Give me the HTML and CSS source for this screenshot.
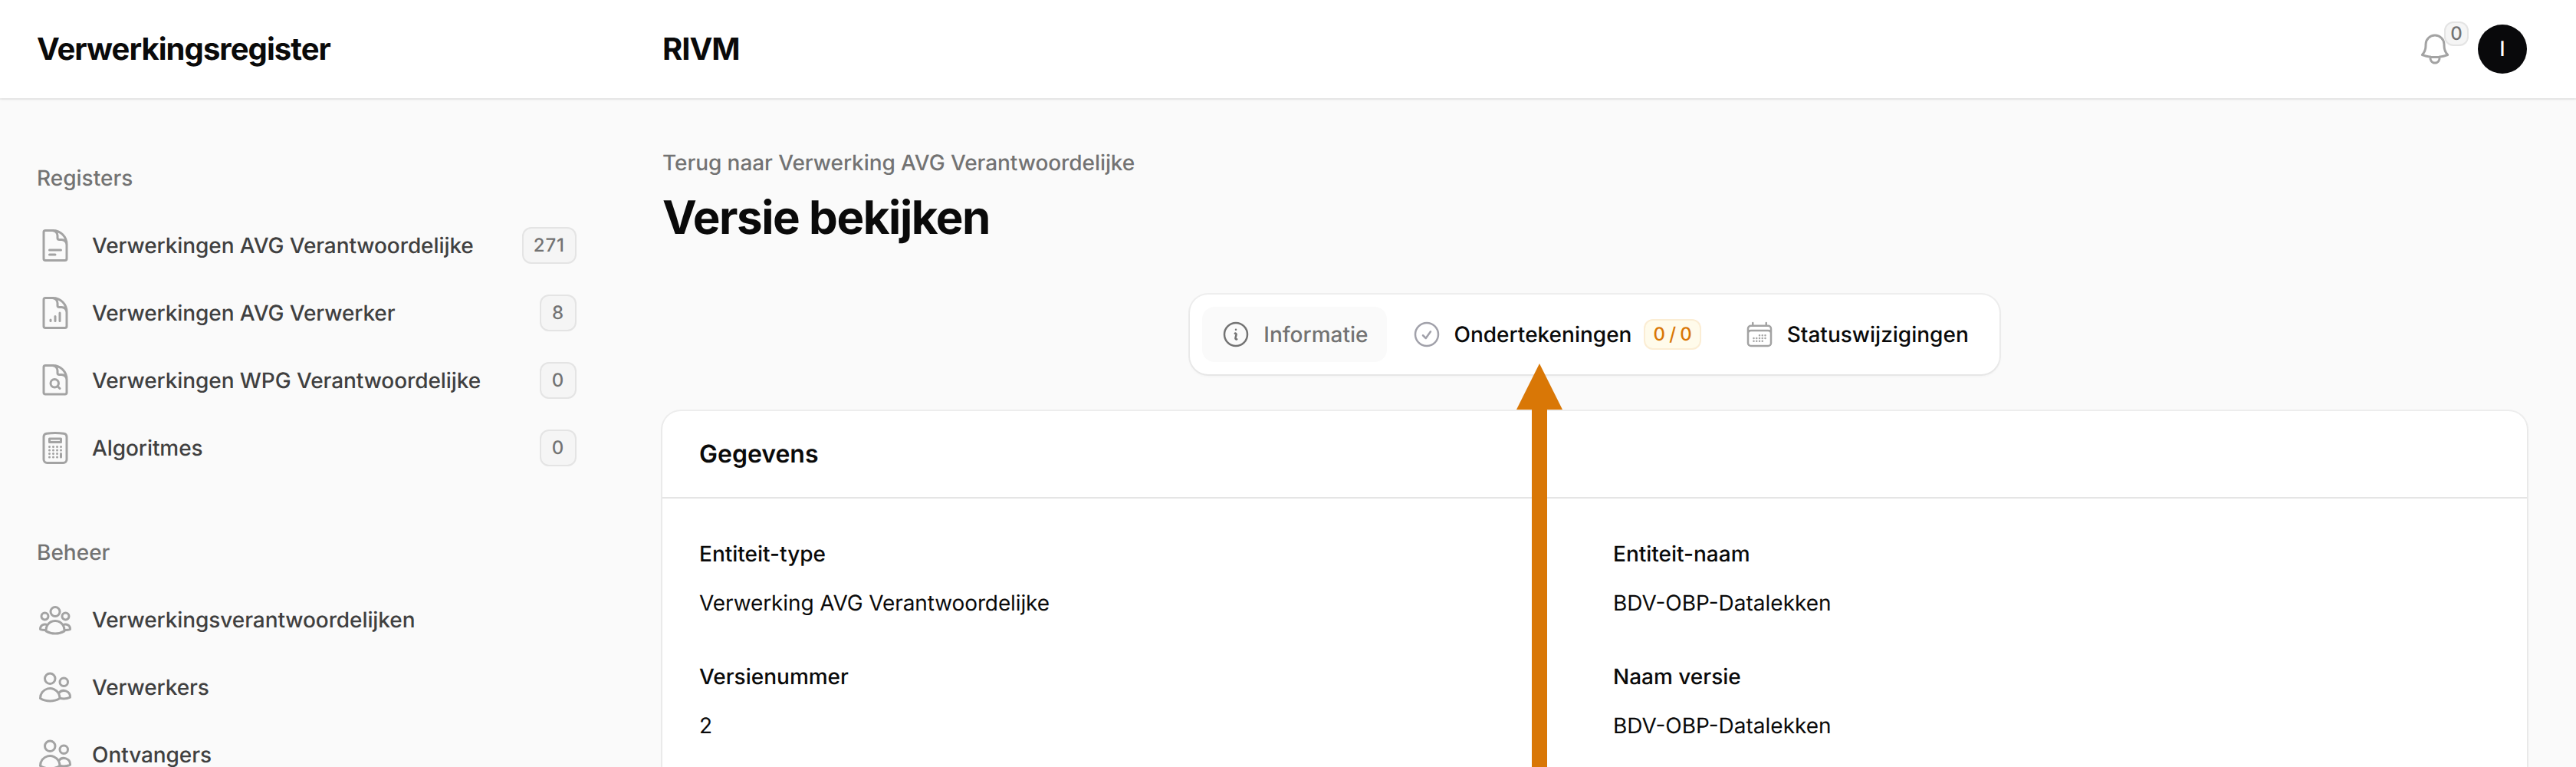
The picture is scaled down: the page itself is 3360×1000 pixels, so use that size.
FILE: index.html
```
<!DOCTYPE html>
<html lang="nl">
<head>
<meta charset="utf-8">
<title>Versie bekijken - Verwerkingsregister</title>
<link rel="stylesheet" href="styles.css">
</head>
<body>
<header class="topbar">
  <div class="brand">Verwerkingsregister</div>
  <div class="tenant">RIVM</div>
  <div class="topbar-actions">
    <div class="notifications">
      <svg class="icon" viewBox="0 0 24 24"><path d="M14.857 17.082a23.848 23.848 0 0 0 5.454-1.31A8.967 8.967 0 0 1 18 9.75V9A6 6 0 0 0 6 9v.75a8.967 8.967 0 0 1-2.312 6.022c1.733.64 3.56 1.085 5.455 1.31m5.714 0a24.255 24.255 0 0 1-5.714 0m5.714 0a3 3 0 1 1-5.714 0"/></svg>
      <span class="badge badge-count">0</span>
    </div>
    <div class="avatar">I</div>
  </div>
</header>
<div class="layout">
  <nav class="sidebar">
    <section class="nav-group">
      <h2 class="nav-label">Registers</h2>
      <a class="nav-item">
        <svg class="icon" viewBox="0 0 24 24"><path d="M19.5 14.25v-2.625a3.375 3.375 0 0 0-3.375-3.375h-1.5A1.125 1.125 0 0 1 13.5 7.125v-1.5a3.375 3.375 0 0 0-3.375-3.375H8.25m0 12.75h7.5m-7.5 3H12M10.5 2.25H5.625c-.621 0-1.125.504-1.125 1.125v17.25c0 .621.504 1.125 1.125 1.125h12.75c.621 0 1.125-.504 1.125-1.125V11.25a9 9 0 0 0-9-9Z"/></svg>
        <span class="nav-text">Verwerkingen AVG Verantwoordelijke</span>
        <span class="badge">271</span>
      </a>
      <a class="nav-item">
        <svg class="icon" viewBox="0 0 24 24"><path d="M19.5 14.25v-2.625a3.375 3.375 0 0 0-3.375-3.375h-1.5A1.125 1.125 0 0 1 13.5 7.125v-1.5a3.375 3.375 0 0 0-3.375-3.375H8.25M9 16.5v.75m3-3v3M15 12v5.25m-4.5-15H5.625c-.621 0-1.125.504-1.125 1.125v17.25c0 .621.504 1.125 1.125 1.125h12.75c.621 0 1.125-.504 1.125-1.125V11.25a9 9 0 0 0-9-9Z"/></svg>
        <span class="nav-text">Verwerkingen AVG Verwerker</span>
        <span class="badge">8</span>
      </a>
      <a class="nav-item">
        <svg class="icon" viewBox="0 0 24 24"><path d="M19.5 14.25v-2.625a3.375 3.375 0 0 0-3.375-3.375h-1.5A1.125 1.125 0 0 1 13.5 7.125v-1.5a3.375 3.375 0 0 0-3.375-3.375H8.25m5.231 13.481L15 17.25m-4.5-15H5.625c-.621 0-1.125.504-1.125 1.125v16.5c0 .621.504 1.125 1.125 1.125h12.75c.621 0 1.125-.504 1.125-1.125V11.25a9 9 0 0 0-9-9Zm3.75 11.625a2.625 2.625 0 1 1-5.25 0 2.625 2.625 0 0 1 5.25 0Z"/></svg>
        <span class="nav-text">Verwerkingen WPG Verantwoordelijke</span>
        <span class="badge">0</span>
      </a>
      <a class="nav-item">
        <svg class="icon" viewBox="0 0 24 24"><path d="M15.75 15.75V18m-7.5-6.75h.008v.008H8.25v-.008Zm0 2.25h.008v.008H8.25V13.5Zm0 2.25h.008v.008H8.25v-.008Zm0 2.25h.008v.008H8.25V18Zm2.498-6.75h.007v.008h-.007v-.008Zm0 2.25h.007v.008h-.007V13.5Zm0 2.25h.007v.008h-.007v-.008Zm0 2.25h.007v.008h-.007V18Zm2.504-6.75h.008v.008h-.008v-.008Zm0 2.25h.008v.008h-.008V13.5Zm0 2.25h.008v.008h-.008v-.008Zm0 2.25h.008v.008h-.008V18Zm2.498-6.75h.008v.008h-.008v-.008Zm0 2.25h.008v.008h-.008V13.5ZM8.25 6h7.5v2.25h-7.5V6ZM12 2.25c-1.892 0-3.758.11-5.593.322C5.307 2.7 4.5 3.65 4.5 4.757V19.5a2.25 2.25 0 0 0 2.25 2.25h10.5a2.25 2.25 0 0 0 2.25-2.25V4.757c0-1.108-.806-2.057-1.907-2.185A48.507 48.507 0 0 0 12 2.25Z"/></svg>
        <span class="nav-text">Algoritmes</span>
        <span class="badge">0</span>
      </a>
    </section>
    <section class="nav-group">
      <h2 class="nav-label">Beheer</h2>
      <a class="nav-item">
        <svg class="icon" viewBox="0 0 24 24"><path d="M18 18.72a9.094 9.094 0 0 0 3.741-.479 3 3 0 0 0-4.682-2.72m.94 3.198.001.031c0 .225-.012.447-.037.666A11.944 11.944 0 0 1 12 21c-2.17 0-4.207-.576-5.963-1.584A6.062 6.062 0 0 1 6 18.719m12 0a5.971 5.971 0 0 0-.941-3.197m0 0A5.995 5.995 0 0 0 12 12.75a5.995 5.995 0 0 0-5.058 2.772m0 0a3 3 0 0 0-4.681 2.72 8.986 8.986 0 0 0 3.74.477m.94-3.197a5.971 5.971 0 0 0-.94 3.197M15 6.75a3 3 0 1 1-6 0 3 3 0 0 1 6 0Zm6 3a2.25 2.25 0 1 1-4.5 0 2.25 2.25 0 0 1 4.5 0Zm-13.5 0a2.25 2.25 0 1 1-4.5 0 2.25 2.25 0 0 1 4.5 0Z"/></svg>
        <span class="nav-text">Verwerkingsverantwoordelijken</span>
      </a>
      <a class="nav-item">
        <svg class="icon" viewBox="0 0 24 24"><path d="M15 19.128a9.38 9.38 0 0 0 2.625.372 9.337 9.337 0 0 0 4.121-.952 4.125 4.125 0 0 0-7.533-2.493M15 19.128v-.003c0-1.113-.285-2.16-.786-3.07M15 19.128v.106A12.318 12.318 0 0 1 8.624 21c-2.331 0-4.512-.645-6.374-1.766l-.001-.109a6.375 6.375 0 0 1 11.964-3.07M12 6.375a3.375 3.375 0 1 1-6.75 0 3.375 3.375 0 0 1 6.75 0Zm8.25 2.25a2.625 2.625 0 1 1-5.25 0 2.625 2.625 0 0 1 5.25 0Z"/></svg>
        <span class="nav-text">Verwerkers</span>
      </a>
      <a class="nav-item">
        <svg class="icon" viewBox="0 0 24 24"><path d="M15 19.128a9.38 9.38 0 0 0 2.625.372 9.337 9.337 0 0 0 4.121-.952 4.125 4.125 0 0 0-7.533-2.493M15 19.128v-.003c0-1.113-.285-2.16-.786-3.07M15 19.128v.106A12.318 12.318 0 0 1 8.624 21c-2.331 0-4.512-.645-6.374-1.766l-.001-.109a6.375 6.375 0 0 1 11.964-3.07M12 6.375a3.375 3.375 0 1 1-6.75 0 3.375 3.375 0 0 1 6.75 0Zm8.25 2.25a2.625 2.625 0 1 1-5.25 0 2.625 2.625 0 0 1 5.25 0Z"/></svg>
        <span class="nav-text">Ontvangers</span>
      </a>
    </section>
  </nav>
  <main class="main">
    <div class="page-header">
      <a class="back-link">Terug naar Verwerking AVG Verantwoordelijke</a>
      <h1 class="page-title">Versie bekijken</h1>
    </div>
    <div class="tabs">
      <a class="tab tab-active">
        <svg class="tab-icon" viewBox="0 0 24 24"><path d="m11.25 11.25.041-.02a.75.75 0 0 1 1.063.852l-.708 2.836a.75.75 0 0 0 1.063.853l.041-.021M21 12a9 9 0 1 1-18 0 9 9 0 0 1 18 0Zm-9-3.75h.008v.008H12V8.25Z"/></svg>
        <span>Informatie</span>
      </a>
      <a class="tab">
        <svg class="tab-icon tab-icon-cool" viewBox="0 0 24 24"><path d="M9 12.75 11.25 15 15 9.75M21 12a9 9 0 1 1-18 0 9 9 0 0 1 18 0Z"/></svg>
        <span>Ondertekeningen</span>
        <span class="badge badge-warning">0 / 0</span>
      </a>
      <a class="tab">
        <svg class="tab-icon" viewBox="0 0 24 24"><path d="M6.75 3v2.25M17.25 3v2.25M3 18.75V7.5a2.25 2.25 0 0 1 2.25-2.25h13.5A2.25 2.25 0 0 1 21 7.5v11.25m-18 0A2.25 2.25 0 0 0 5.25 21h13.5A2.25 2.25 0 0 0 21 18.75m-18 0v-7.5A2.25 2.25 0 0 1 5.25 9h13.5A2.25 2.25 0 0 1 21 11.25v7.5m-9-6h.008v.008H12v-.008ZM12 15h.008v.008H12V15Zm0 2.25h.008v.008H12v-.008ZM9.75 15h.008v.008H9.75V15Zm0 2.25h.008v.008H9.75v-.008ZM7.5 15h.008v.008H7.5V15Zm0 2.25h.008v.008H7.5v-.008Zm6.75-4.5h.008v.008h-.008v-.008Zm0 2.25h.008v.008h-.008V15Zm0 2.25h.008v.008h-.008v-.008Zm2.25-4.5h.008v.008H16.5v-.008Zm0 2.25h.008v.008H16.5V15Z"/></svg>
        <span>Statuswijzigingen</span>
      </a>
    </div>
    <section class="card">
      <h3 class="card-title">Gegevens</h3>
      <dl class="fields">
        <div class="field"><dt>Entiteit-type</dt><dd class="value-long">Verwerking AVG Verantwoordelijke</dd></div>
        <div class="field"><dt>Entiteit-naam</dt><dd>BDV-OBP-Datalekken</dd></div>
        <div class="field"><dt>Versienummer</dt><dd>2</dd></div>
        <div class="field"><dt>Naam versie</dt><dd>BDV-OBP-Datalekken</dd></div>
      </dl>
    </section>
  </main>
</div>
<svg class="pointer" viewBox="0 0 60 526"><path d="M30 0 60 60H40V526H20V60H0Z"/></svg>
</body>
</html>
```
FILE: styles.css
```
* {
  box-sizing: border-box;
  margin: 0;
  padding: 0;
}

body {
  height: 1000px;
  position: relative;
  overflow: hidden;
  background: #fafafa;
  color: #0a0a0a;
  font-family: Inter, "Liberation Sans", sans-serif;
  font-size: 28px;
  line-height: 48px;
  text-rendering: geometricPrecision;
  -webkit-font-smoothing: antialiased;
}

svg {
  fill: none;
  stroke: #a3a3a3;
  stroke-width: 1.5;
  stroke-linecap: round;
  stroke-linejoin: round;
  flex: none;
}

.icon {
  display: block;
  width: 48px;
  height: 48px;
}

.topbar {
  position: relative;
  display: flex;
  align-items: center;
  height: 128px;
  padding-right: 64px;
  background: #fff;
  box-shadow: 0 0 0 2px rgba(10, 10, 10, 0.05), 0 2px 4px rgba(0, 0, 0, 0.05);
}

.brand,
.tenant {
  font-size: 40px;
  font-weight: 700;
  line-height: 40px;
  letter-spacing: -0.025em;
}

.brand {
  width: 864px;
  padding-left: 48px;
  letter-spacing: -0.0235em;
}

.topbar-actions {
  display: flex;
  align-items: center;
  gap: 32px;
  margin-left: auto;
}

.notifications {
  position: relative;
}

.badge {
  display: flex;
  align-items: center;
  justify-content: center;
  min-width: 48px;
  padding: 8px 15px;
  border-radius: 12px;
  background: #f5f5f5;
  box-shadow: inset 0 0 0 2px rgba(82, 82, 82, 0.1);
  color: #737373;
  font-size: 24px;
  font-weight: 500;
  line-height: 32px;
  letter-spacing: 0.04em;
}

.badge-count {
  position: absolute;
  left: 36px;
  top: -12px;
  min-width: 32px;
  height: 32px;
  padding: 0;
  letter-spacing: 0;
}

.badge-warning {
  padding: 4px 12px;
  background: #fffbeb;
  box-shadow: inset 0 0 0 2px rgba(217, 119, 6, 0.1);
  color: #d97706;
  letter-spacing: 0;
  word-spacing: -1.2px;
}

.avatar {
  display: flex;
  align-items: center;
  justify-content: center;
  width: 64px;
  height: 64px;
  border-radius: 50%;
  background: #09090b;
  color: #fff;
  font-size: 27px;
  font-weight: 500;
}

.layout {
  display: flex;
  height: 872px;
  overflow: hidden;
}

.sidebar {
  display: flex;
  flex-direction: column;
  gap: 56px;
  width: 800px;
  padding: 64px 48px 0;
}

.nav-group {
  display: flex;
  flex-direction: column;
  gap: 8px;
}

.nav-label {
  padding: 16px 0;
  color: #737373;
  font-size: 28px;
  font-weight: 500;
}

.nav-item {
  display: flex;
  align-items: center;
  gap: 24px;
  height: 80px;
  color: #404040;
  font-weight: 500;
}

.nav-text {
  flex: 1;
  letter-spacing: -0.003em;
}

.main {
  display: flex;
  flex-direction: column;
  flex: 1;
  padding: 64px 64px 0;
}

.page-header {
  display: flex;
  flex-direction: column;
  gap: 16px;
  margin-bottom: 64px;
}

.back-link {
  color: #737373;
  font-weight: 500;
  line-height: 40px;
  letter-spacing: -0.0025em;
}

.page-title {
  font-size: 60px;
  font-weight: 700;
  line-height: 72px;
  letter-spacing: -0.024em;
}

.tabs {
  display: flex;
  gap: 8px;
  align-self: center;
  margin-bottom: 48px;
  padding: 16px;
  border-radius: 24px;
  background: #fff;
  box-shadow: 0 0 0 2px rgba(10, 10, 10, 0.05), 0 2px 4px rgba(0, 0, 0, 0.05);
}

.tab {
  display: flex;
  align-items: center;
  gap: 16px;
  padding: 16px 24px;
  border-radius: 16px;
  font-weight: 500;
  line-height: 40px;
  white-space: nowrap;
}

.tab .badge {
  line-height: 32px;
}

.tab-active {
  background: #fafafa;
  color: #737373;
}

.tab-icon {
  width: 40px;
  height: 40px;
}

.tab-icon-cool {
  stroke: #a1a1aa;
}

.tab-active .tab-icon {
  stroke: #737373;
}

.card {
  flex: 1;
  border-radius: 24px 24px 0 0;
  background: #fff;
  box-shadow: 0 0 0 2px rgba(10, 10, 10, 0.05), 0 2px 4px rgba(0, 0, 0, 0.05);
}

.card-title {
  padding: 32px 48px;
  font-size: 32px;
  font-weight: 600;
}

.fields {
  display: grid;
  grid-template-columns: 1fr 1fr;
  gap: 48px;
  padding: 48px 48px 0;
  border-top: 2px solid #e5e5e5;
}

.field {
  display: flex;
  flex-direction: column;
  gap: 16px;
}

.field dt {
  font-weight: 500;
}

.value-long {
  letter-spacing: -0.004em;
}

/* Annotation arrow laid over the page, pointing at the signatures tab. */
.pointer {
  position: absolute;
  left: 1977.5px;
  top: 474px;
  width: 60px;
  height: 526px;
  fill: #d97706;
  stroke: none;
}
```
